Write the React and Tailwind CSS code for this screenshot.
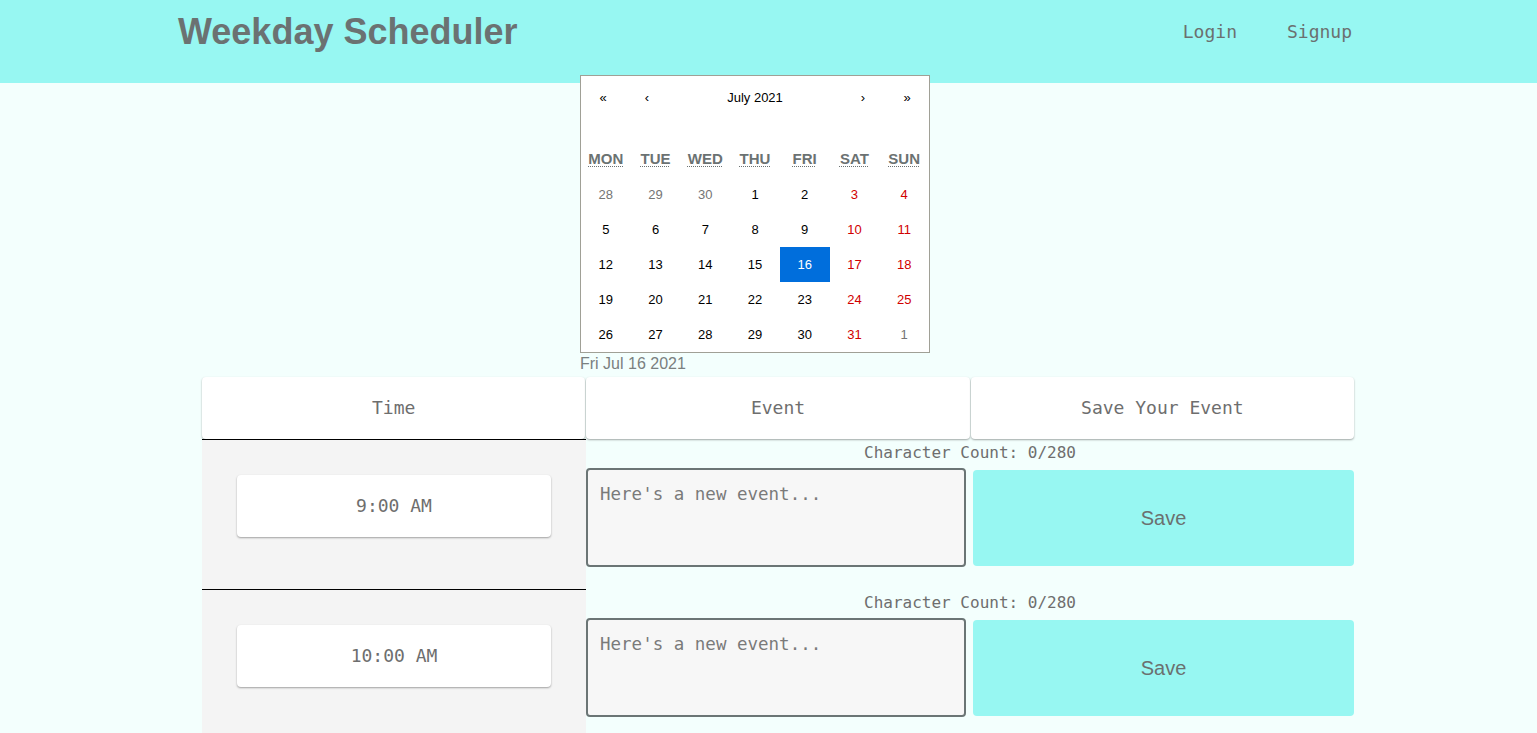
import { useState } from 'react';

const HOURS = ['9:00 AM', '10:00 AM'];
const WEEKDAYS = ['Mon', 'Tue', 'Wed', 'Thu', 'Fri', 'Sat', 'Sun'];

// July 2021 grid, Monday first
const DAYS = [
  [28, true], [29, true], [30, true], [1], [2], [3], [4],
  [5], [6], [7], [8], [9], [10], [11],
  [12], [13], [14], [15], [16], [17], [18],
  [19], [20], [21], [22], [23], [24], [25],
  [26], [27], [28], [29], [30], [31], [1, true],
];

const mono = "font-['DejaVu_Sans_Mono','Liberation_Mono',monospace]";
const sans = "font-['Liberation_Sans',Arial,sans-serif]";

function Calendar({ selected, onSelect }) {
  return (
    <div className={`relative ml-[580px] -mt-[8px] w-[350px] bg-white border border-[#a0a096] ${sans}`}>
      <div className="flex h-[44px] mb-[21px] text-[13px] text-black">
        <button className="w-[44px] flex items-center justify-center">«</button>
        <button className="w-[44px] flex items-center justify-center">‹</button>
        <button className="flex-1 flex items-center justify-center">July 2021</button>
        <button className="w-[44px] flex items-center justify-center">›</button>
        <button className="w-[44px] flex items-center justify-center">»</button>
      </div>
      <div className="grid grid-cols-7 h-[36px] items-center text-center">
        {WEEKDAYS.map((d) => (
          <abbr
            key={d}
            title={d}
            className="text-[15px] font-bold uppercase text-[#6b7272] underline decoration-dotted decoration-1 underline-offset-[2px]"
          >
            {d}
          </abbr>
        ))}
      </div>
      <div className="grid grid-cols-7">
        {DAYS.map(([n, other], i) => {
          const weekend = i % 7 >= 5;
          const active = !other && n === selected;
          let tone = 'text-black';
          if (weekend) tone = 'text-[#d10000]';
          if (other) tone = 'text-[#757575]';
          if (active) tone = 'text-white bg-[#006edc]';
          return (
            <button
              key={i}
              onClick={() => !other && onSelect(n)}
              className={`h-[35px] flex items-center justify-center text-[13px] ${tone}`}
            >
              {n}
            </button>
          );
        })}
      </div>
    </div>
  );
}

function Row({ hour }) {
  const [text, setText] = useState('');
  return (
    <>
      <div className="h-[150px] border-t border-black bg-[#f4f4f4] pt-[35px] px-[35px]">
        <div className={`h-[62px] pb-[2px] bg-white rounded-[4px] shadow-[0_1px_2px_rgba(0,0,0,0.35)] flex items-center justify-center text-[18px] text-[#6e6e6e] ${mono}`}>
          {hour}
        </div>
      </div>
      <div className="h-[150px]">
        <p className={`h-[29px] leading-[28px] text-center text-[16px] text-[#6e6e6e] ${mono}`}>
          Character Count: {text.length}/280
        </p>
        <div className="flex items-start">
          <textarea
            value={text}
            maxLength={280}
            onChange={(e) => setText(e.target.value)}
            placeholder="Here's a new event..."
            className={`w-[380px] h-[99px] resize-none rounded-[4px] border-2 border-[#6b7575] bg-[#f7f7f7] pt-[14px] px-[12px] text-[17.5px] leading-[20px] text-[#555] placeholder:text-[#7a7a7a] outline-none ${mono}`}
          />
          <button className={`ml-[7px] mt-[2px] w-[381px] h-[96px] rounded-[4px] bg-[#97f7f2] text-[20px] text-[#6b7070] ${sans}`}>
            Save
          </button>
        </div>
      </div>
    </>
  );
}

export default function App() {
  const [selected, setSelected] = useState(16);

  return (
    <div className="min-h-screen bg-[#f3fffd]">
      {/* Header */}
      <header className="h-[83px] bg-[#97f7f2]">
        <div className="ml-[178px] w-[1174px] flex justify-between items-start">
          <h1 className={`pt-[14px] text-[36px] leading-none font-bold text-[#6b7272] ${sans}`}>Weekday Scheduler</h1>
          <nav className={`pt-[23px] flex gap-[50px] text-[18px] leading-none text-[#6b7070] ${mono}`}>
            <a href="#">Login</a>
            <a href="#">Signup</a>
          </nav>
        </div>
      </header>

      <Calendar selected={selected} onSelect={setSelected} />
      <div className={`ml-[580px] h-[24px] pt-[2px] text-[16px] leading-[18px] text-[#7a8080] ${sans}`}>
        Fri Jul {selected} 2021
      </div>

      {/* Schedule table */}
      <div className="ml-[202px] w-[1152px]">
        <div className={`grid grid-cols-3 gap-px h-[62px] text-[18px] text-[#6e6e6e] ${mono}`}>
          {['Time', 'Event', 'Save Your Event'].map((h) => (
            <div key={h} className="pb-[2px] bg-white rounded-[4px] shadow-[0_1px_2px_rgba(0,0,0,0.35)] flex items-center justify-center">
              {h}
            </div>
          ))}
        </div>
        <div className="grid grid-cols-[384px_768px]">
          {HOURS.map((h) => (
            <Row key={h} hour={h} />
          ))}
        </div>
      </div>
    </div>
  );
}
